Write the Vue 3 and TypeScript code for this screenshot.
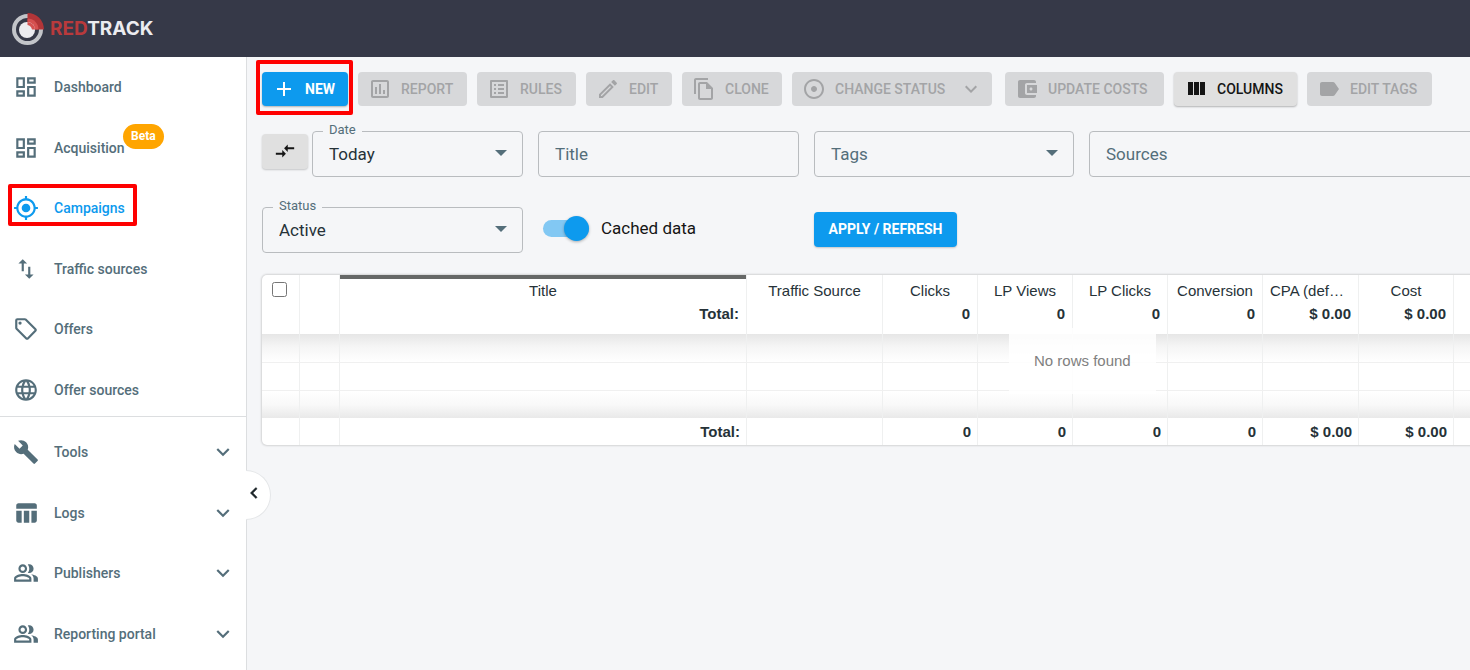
<script setup lang="ts">
import { ref } from 'vue'

interface NavItem {
  label: string
  icon: string
  active?: boolean
  badge?: string
}

interface Action {
  key: string
  label: string
  icon: string
  enabled?: boolean
  menu?: boolean
  marked?: boolean
}

interface Column {
  key: string
  title: string
  total: string
}

const icons: Record<string, string> = {
  dashboard: 'M19 5v2h-4V5h4M9 5v6H5V5h4m10 8v6h-4v-6h4M9 17v2H5v-2h4M21 3h-8v6h8V3zM11 3H3v10h8V3zm10 8h-8v10h8V11zm-10 4H3v6h8v-6z',
  target: 'M12 8c-2.21 0-4 1.79-4 4s1.79 4 4 4 4-1.79 4-4-1.79-4-4-4zm8.94 3c-.46-4.17-3.77-7.48-7.94-7.94V1h-2v2.06C6.83 3.52 3.52 6.83 3.06 11H1v2h2.06c.46 4.17 3.77 7.48 7.94 7.94V23h2v-2.06c4.17-.46 7.48-3.77 7.94-7.94H23v-2h-2.06zM12 19c-3.87 0-7-3.13-7-7s3.13-7 7-7 7 3.13 7 7-3.13 7-7 7z',
  traffic: 'M9 3L5 6.99h3V14h2V6.99h3L9 3zm7 14.01V10h-2v7.01h-3L15 21l4-3.99h-3z',
  tag: 'M21.41 11.58l-9-9C12.04 2.21 11.53 2 11 2H4a2 2 0 00-2 2v7c0 .53.21 1.04.59 1.41l9 9c.36.36.86.59 1.41.59.53 0 1.04-.21 1.41-.59l7-7c.37-.36.59-.86.59-1.41 0-.53-.21-1.04-.59-1.42zM13 20.01L4 11V4h7l9 9-7 7.01zM6.5 5a1.5 1.5 0 100 3 1.5 1.5 0 000-3z',
  globe: 'M11.99 2C6.47 2 2 6.48 2 12s4.47 10 9.99 10C17.52 22 22 17.52 22 12S17.52 2 11.99 2zm6.93 6h-2.95c-.32-1.25-.78-2.45-1.38-3.56 1.84.63 3.37 1.91 4.33 3.56zM12 4.04c.83 1.2 1.48 2.53 1.91 3.96h-3.82c.43-1.43 1.08-2.76 1.91-3.96zM4.26 14C4.1 13.36 4 12.69 4 12s.1-1.36.26-2h3.38c-.08.66-.14 1.32-.14 2 0 .68.06 1.34.14 2H4.26zm.82 2h2.95c.32 1.25.78 2.45 1.38 3.56-1.84-.63-3.37-1.9-4.33-3.56zm2.95-8H5.08c.96-1.66 2.49-2.93 4.33-3.56C8.81 5.55 8.35 6.75 8.03 8zM12 19.96c-.83-1.2-1.48-2.53-1.91-3.96h3.82c-.43 1.43-1.08 2.76-1.91 3.96zM14.34 14H9.66c-.09-.66-.16-1.32-.16-2 0-.68.07-1.35.16-2h4.68c.09.65.16 1.32.16 2 0 .68-.07 1.34-.16 2zm.25 5.56c.6-1.11 1.06-2.31 1.38-3.56h2.95c-.96 1.65-2.49 2.93-4.33 3.56zM16.36 14c.08-.66.14-1.32.14-2 0-.68-.06-1.34-.14-2h3.38c.16.64.26 1.31.26 2s-.1 1.36-.26 2h-3.38z',
  wrench: 'M22.7 19l-9.1-9.1c.9-2.3.4-5-1.5-6.9-2-2-5-2.4-7.4-1.3L9 6 6 9 1.6 4.7C.4 7.1.9 10.1 2.9 12.1c1.9 1.9 4.6 2.4 6.9 1.5l9.1 9.1c.4.4 1 .4 1.4 0l2.3-2.3c.5-.4.5-1.1.1-1.4z',
  table: 'M10 10.02h5V21h-5zM17 21h3c1.1 0 2-.9 2-2v-9h-5v11zm3-18H5c-1.1 0-2 .9-2 2v3h19V5c0-1.1-.9-2-2-2zM3 19c0 1.1.9 2 2 2h3V10.02H3V19z',
  people: 'M16.67 13.13C18.04 14.06 19 15.32 19 17v3h4v-3c0-2.18-3.57-3.47-6.33-3.87zM15 12c2.21 0 4-1.79 4-4s-1.79-4-4-4c-.47 0-.91.1-1.33.24C14.5 5.27 15 6.58 15 8s-.5 2.73-1.33 3.76c.42.14.86.24 1.33.24zM9 12c2.21 0 4-1.79 4-4s-1.79-4-4-4-4 1.79-4 4 1.79 4 4 4zm0-6c1.1 0 2 .9 2 2s-.9 2-2 2-2-.9-2-2 .9-2 2-2zm0 7c-2.67 0-8 1.34-8 4v3h16v-3c0-2.66-5.33-4-8-4zm6 5H3v-.99C3.2 16.29 6.3 15 9 15s5.8 1.29 6 2v1z',
  chevron: 'M16.59 8.59L12 13.17 7.41 8.59 6 10l6 6 6-6z',
  back: 'M15.41 7.41L14 6l-6 6 6 6 1.41-1.41L10.83 12z',
  add: 'M19 13h-6v6h-2v-6H5v-2h6V5h2v6h6v2z',
  report: 'M9 17H7v-7h2v7zm4 0h-2V7h2v10zm4 0h-2v-4h2v4zm2 2H5V5h14v14zm0-16H5c-1.1 0-2 .9-2 2v14c0 1.1.9 2 2 2h14c1.1 0 2-.9 2-2V5c0-1.1-.9-2-2-2z',
  rules: 'M19 5v14H5V5h14m1.1-2H3.9c-.5 0-.9.4-.9.9v16.2c0 .4.4.9.9.9h16.2c.4 0 .9-.5.9-.9V3.9c0-.5-.5-.9-.9-.9zM11 7h6v2h-6V7zm0 4h6v2h-6v-2zm0 4h6v2h-6zM7 7h2v2H7zm0 4h2v2H7zm0 4h2v2H7z',
  edit: 'M14.06 9.02l.92.92L5.92 19H5v-.92l9.06-9.06M17.66 3c-.25 0-.51.1-.7.29l-1.83 1.83 3.75 3.75 1.83-1.83c.39-.39.39-1.02 0-1.41l-2.34-2.34c-.2-.2-.45-.29-.71-.29zm-3.6 3.19L3 17.25V21h3.75L17.81 9.94l-3.75-3.75z',
  clone: 'M16 1H4c-1.1 0-2 .9-2 2v14h2V3h12V1zm-1 4H8c-1.1 0-1.99.9-1.99 2L6 21c0 1.1.89 2 1.99 2H19c1.1 0 2-.9 2-2V11l-6-6zM8 21V7h6v5h5v9H8z',
  status: 'M12 2C6.49 2 2 6.49 2 12s4.49 10 10 10 10-4.49 10-10S17.51 2 12 2zm0 18c-4.41 0-8-3.59-8-8s3.59-8 8-8 8 3.59 8 8-3.59 8-8 8zm3-8c0 1.66-1.34 3-3 3s-3-1.34-3-3 1.34-3 3-3 3 1.34 3 3z',
  wallet: 'M21 18v1c0 1.1-.9 2-2 2H5c-1.11 0-2-.9-2-2V5c0-1.1.89-2 2-2h14c1.1 0 2 .9 2 2v1h-9c-1.11 0-2 .9-2 2v8c0 1.1.89 2 2 2h9zm-9-2h10V8H12v8zm4-2.5c-.83 0-1.5-.67-1.5-1.5s.67-1.5 1.5-1.5 1.5.67 1.5 1.5-.67 1.5-1.5 1.5z',
  columns: 'M10 18h5V5h-5v13zm-6 0h5V5H4v13zM16 5v13h5V5h-5z',
  label: 'M17.63 5.84C17.27 5.33 16.67 5 16 5L5 5.01C3.9 5.01 3 5.9 3 7v10c0 1.1.9 1.99 2 1.99L16 19c.67 0 1.27-.33 1.63-.84L22 12l-4.37-6.16z',
  compare: 'M9.01 14H2v2h7.01v3L13 15l-3.99-4v3zm5.98-1v-3H22V8h-7.01V5L11 9l3.99 4z',
}

const pages: NavItem[] = [
  { label: 'Dashboard', icon: 'dashboard' },
  { label: 'Acquisition', icon: 'dashboard', badge: 'Beta' },
  { label: 'Campaigns', icon: 'target', active: true },
  { label: 'Traffic sources', icon: 'traffic' },
  { label: 'Offers', icon: 'tag' },
  { label: 'Offer sources', icon: 'globe' },
]

const sections: NavItem[] = [
  { label: 'Tools', icon: 'wrench' },
  { label: 'Logs', icon: 'table' },
  { label: 'Publishers', icon: 'people' },
  { label: 'Reporting portal', icon: 'people' },
]

const actions: Action[] = [
  { key: 'new', label: 'NEW', icon: 'add', enabled: true, marked: true },
  { key: 'report', label: 'REPORT', icon: 'report' },
  { key: 'rules', label: 'RULES', icon: 'rules' },
  { key: 'edit', label: 'EDIT', icon: 'edit' },
  { key: 'clone', label: 'CLONE', icon: 'clone' },
  { key: 'status', label: 'CHANGE STATUS', icon: 'status', menu: true },
  { key: 'costs', label: 'UPDATE COSTS', icon: 'wallet' },
  { key: 'columns', label: 'COLUMNS', icon: 'columns', enabled: true },
  { key: 'tags', label: 'EDIT TAGS', icon: 'label' },
]

const columns: Column[] = [
  { key: 'title', title: 'Title', total: 'Total:' },
  { key: 'source', title: 'Traffic Source', total: '' },
  { key: 'clicks', title: 'Clicks', total: '0' },
  { key: 'lp-views', title: 'LP Views', total: '0' },
  { key: 'lp-clicks', title: 'LP Clicks', total: '0' },
  { key: 'conversion', title: 'Conversion', total: '0' },
  { key: 'cpa', title: 'CPA (default)', total: '$ 0.00' },
  { key: 'cost', title: 'Cost', total: '$ 0.00' },
  { key: 'more', title: '', total: '' },
]

const date = ref('Today')
const status = ref('Active')
const tags = ref('')
const source = ref('')
const title = ref('')
const cached = ref(true)
</script>

<template>
  <div class="app">
    <header class="topbar">
      <a class="brand" href="#" aria-label="RedTrack">
        <svg class="brand-mark" viewBox="0 0 32 32" aria-hidden="true">
          <circle cx="15.5" cy="16.5" r="13.5" fill="none" stroke="#c3c5c9" stroke-width="4" />
          <path d="M15.5 0A16.5 16.5 0 0 1 32 16.5H15.5z" fill="#b23538" />
          <path d="M15.5 5.500A11 11 0 0 1 26.500 16.500H15.500z" fill="#d55050" />
          <circle cx="15" cy="17" r="8" fill="#ececf0" />
          <path d="M15.5 9a8 8 0 0 1 7.500 7.500H20A6 6 0 0 0 15.500 12z" fill="#d55050" />
        </svg>
        <span class="brand-name"><span class="brand-red">RED</span>TRACK</span>
      </a>
    </header>

    <div class="layout">
      <aside class="sidebar">
        <nav aria-label="Main">
          <ul class="nav pages">
            <li v-for="item in pages" :key="item.label" class="nav-row">
              <a class="nav-item" :class="{ active: item.active }" href="#">
                <svg class="nav-icon" viewBox="0 0 24 24" aria-hidden="true"><path :d="icons[item.icon]" /></svg>
                <span>{{ item.label }}</span>
              </a>
              <span v-if="item.badge" class="badge">{{ item.badge }}</span>
              <span v-if="item.active" class="marker nav-marker" aria-hidden="true"></span>
            </li>
          </ul>
          <ul class="nav sections">
            <li v-for="item in sections" :key="item.label" class="nav-row">
              <button class="nav-item" type="button" aria-expanded="false">
                <svg class="nav-icon" viewBox="0 0 24 24" aria-hidden="true"><path :d="icons[item.icon]" /></svg>
                <span>{{ item.label }}</span>
                <svg class="nav-icon nav-chevron" viewBox="0 0 24 24" aria-hidden="true"><path :d="icons.chevron" /></svg>
              </button>
            </li>
          </ul>
        </nav>
        <button class="collapse" type="button" aria-label="Collapse menu">
          <svg class="collapse-icon" viewBox="0 0 24 24" aria-hidden="true"><path :d="icons.back" /></svg>
        </button>
      </aside>

      <main class="content">
        <div class="toolbar">
          <div v-for="action in actions" :key="action.key" class="action" :class="`action-${action.key}`">
            <button class="btn" type="button" :disabled="!action.enabled">
              <svg class="btn-icon" viewBox="0 0 24 24" aria-hidden="true"><path :d="icons[action.icon]" /></svg>
              <span>{{ action.label }}</span>
              <svg v-if="action.menu" class="btn-icon btn-chevron" viewBox="0 0 24 24" aria-hidden="true"><path :d="icons.chevron" /></svg>
            </button>
            <span v-if="action.marked" class="marker action-marker" aria-hidden="true"></span>
          </div>
        </div>

        <form class="filters" @submit.prevent>
          <div class="date-group">
            <button class="compare" type="button" aria-label="Compare dates">
              <svg class="compare-icon" viewBox="0 0 24 24" aria-hidden="true"><path :d="icons.compare" /></svg>
            </button>
            <div class="field">
              <label class="field-label" for="date">Date</label>
              <select id="date" v-model="date" class="control">
                <option>Today</option>
                <option>Yesterday</option>
              </select>
              <span class="arrow" aria-hidden="true"></span>
            </div>
          </div>
          <div class="field">
            <input v-model="title" class="control" type="text" placeholder="Title" aria-label="Title" />
          </div>
          <div class="field">
            <select v-model="tags" class="control empty" aria-label="Tags">
              <option value="">Tags</option>
            </select>
            <span class="arrow" aria-hidden="true"></span>
          </div>
          <div class="field">
            <select v-model="source" class="control empty" aria-label="Sources">
              <option value="">Sources</option>
            </select>
          </div>
          <div class="field">
            <label class="field-label" for="status">Status</label>
            <select id="status" v-model="status" class="control">
              <option>Active</option>
              <option>Paused</option>
            </select>
            <span class="arrow" aria-hidden="true"></span>
          </div>
          <label class="switch" for="cached">
            <input id="cached" v-model="cached" class="switch-input" type="checkbox" role="switch" />
            <span>Cached data</span>
          </label>
          <button class="apply" type="submit">APPLY / REFRESH</button>
        </form>

        <section class="grid" aria-label="Campaigns">
          <table>
            <colgroup>
              <col class="col-check" />
              <col class="col-icon" />
              <col v-for="col in columns" :key="col.key" :class="`col-${col.key}`" />
            </colgroup>
            <thead>
              <tr class="titles">
                <th><input class="check" type="checkbox" aria-label="Select all" /></th>
                <th></th>
                <th v-for="col in columns" :key="col.key" :class="{ sorted: col.key === 'title' }">{{ col.title }}</th>
              </tr>
              <tr class="totals">
                <td></td>
                <td></td>
                <td v-for="col in columns" :key="col.key">{{ col.total }}</td>
              </tr>
            </thead>
            <tbody>
              <tr v-for="row in 3" :key="row">
                <td v-for="cell in columns.length + 2" :key="cell"></td>
              </tr>
            </tbody>
            <tfoot>
              <tr>
                <td></td>
                <td></td>
                <td v-for="col in columns" :key="col.key">{{ col.total }}</td>
              </tr>
            </tfoot>
          </table>
          <p class="no-rows">No rows found</p>
        </section>
      </main>
    </div>
  </div>
</template>

<style>
body {
  background: #f5f6f8;
}
</style>

<style scoped>
.app {
  display: flex;
  flex-direction: column;
  height: 100vh;
  overflow: hidden;
  font-family: Roboto, "Liberation Sans", sans-serif;
  color: #263238;
}

.app *,
.app *::before {
  box-sizing: border-box;
}

svg {
  display: block;
  flex: none;
  fill: currentColor;
}

button {
  font-family: inherit;
  cursor: pointer;
}

.topbar {
  flex: none;
  display: flex;
  align-items: center;
  height: 57px;
  padding: 0 12px;
  background: #363948;
}

.brand {
  display: flex;
  align-items: center;
  gap: 6px;
  color: #ececf0;
  text-decoration: none;
}

.brand-mark {
  width: 32px;
  height: 32px;
}

.brand-name {
  font: 700 19px/24px Inter, "Liberation Sans", sans-serif;
}

.brand-red {
  color: #b93a3c;
}

.layout {
  flex: 1;
  display: flex;
  min-height: 0;
}

.sidebar {
  position: relative;
  z-index: 1;
  flex: none;
  width: 247px;
  border-right: 1px solid #dcdee0;
  background: #fff;
}

.nav {
  display: flex;
  flex-direction: column;
  justify-content: space-between;
  margin: 0;
  padding: 0;
  list-style: none;
}

.pages {
  min-height: 360px;
  padding: 6px 0 2px;
  border-bottom: 1px solid #dcdee0;
}

.sections {
  min-height: 241px;
  padding-top: 11px;
}

.nav-row {
  position: relative;
}

.nav-item {
  display: flex;
  align-items: center;
  gap: 15px;
  width: 100%;
  height: 48px;
  padding: 0 10px 0 13px;
  border: 0;
  background: none;
  color: #546e7a;
  font-size: 14px;
  font-weight: 500;
  line-height: 20px;
  text-decoration: none;
}

.nav-item.active {
  color: #0d9aee;
}

.nav-icon {
  width: 26px;
  height: 26px;
}

.nav-chevron {
  margin-left: auto;
}

.badge {
  position: absolute;
  top: 0;
  left: 123px;
  padding: 0 8px;
  border-radius: 13px;
  background: #ffa500;
  color: #fff;
  font-size: 12px;
  font-weight: 700;
  line-height: 25px;
}

.marker {
  position: absolute;
  border: 4px solid #fe0000;
  border-radius: 2px;
  pointer-events: none;
}

.nav-marker {
  top: 0;
  left: 8px;
  width: 129px;
  height: 42px;
}

.action-marker {
  inset: -12px -5px -9px -6px;
}

.collapse {
  position: absolute;
  top: 413px;
  left: 246px;
  display: flex;
  align-items: center;
  width: 25px;
  height: 50px;
  padding: 0 0 4px;
  border: 1px solid #e4e6e8;
  border-left: 0;
  border-radius: 0 25px 25px 0;
  background: #fff;
  color: #1d2529;
}

.collapse-icon {
  width: 22px;
  height: 22px;
  margin-left: -3px;
  stroke: currentColor;
  stroke-width: 0.5;
}

.content {
  flex: 1;
  min-width: 0;
  padding: 15px 0 0 15px;
  overflow: hidden;
}

.toolbar {
  display: flex;
  gap: 10px;
}

.action {
  position: relative;
  flex: none;
}

.btn {
  display: flex;
  align-items: center;
  gap: 9px;
  width: 100%;
  height: 34px;
  padding: 0 9px 0 10px;
  border: 0;
  border-radius: 4px;
  background: #e0e0e0;
  color: #151515;
  font-size: 14px;
  font-weight: 500;
  white-space: nowrap;
  box-shadow: 0 1px 2px rgba(0, 0, 0, 0.28);
}

.btn:disabled {
  background: #d7d8da;
  color: #a3a4a6;
  box-shadow: none;
}

.btn-icon {
  width: 24px;
  height: 24px;
}

.btn-chevron {
  margin-left: auto;
}

.action-new { width: 86px; }
.action-report { width: 109px; }
.action-rules { width: 99px; }
.action-edit { width: 86px; }
.action-clone { width: 100px; }
.action-status { width: 200px; margin-right: 3px; }
.action-costs { width: 159px; }
.action-columns { width: 123px; }
.action-tags { width: 125px; }

.action-new .btn {
  background: #0d9aee;
  color: #fff;
  font-weight: 700;
}

.filters {
  display: grid;
  grid-template-columns: 261fr 261fr 260fr 401fr;
  gap: 30px 15px;
  align-items: center;
  margin: 25px -20px 0 0;
}

.date-group {
  display: flex;
  align-items: center;
  gap: 4px;
}

.compare {
  display: flex;
  align-items: center;
  justify-content: center;
  width: 46px;
  height: 35px;
  margin-bottom: 6px;
  padding: 0;
  border: 0;
  border-radius: 4px;
  background: #e0e0e0;
  color: #151515;
  box-shadow: 0 1px 2px rgba(0, 0, 0, 0.2);
}

.compare-icon {
  width: 22px;
  height: 22px;
}

.field {
  position: relative;
  flex: 1;
  min-width: 0;
}

.field-label {
  position: absolute;
  top: -9px;
  left: 11px;
  padding: 0 6px;
  background: #f5f6f8;
  color: #546e7a;
  font-size: 13px;
  line-height: 16px;
}

.control {
  display: block;
  width: 100%;
  height: 46px;
  padding: 0 16px;
  border: 1px solid #b9bcbf;
  border-radius: 4px;
  outline: 0;
  background: transparent;
  color: #263238;
  font-family: inherit;
  font-size: 17px;
  appearance: none;
}

.control.empty,
.control::placeholder {
  color: #546e7a;
  opacity: 1;
}

.arrow {
  position: absolute;
  top: 19px;
  right: 16px;
  border: 6px solid transparent;
  border-top-color: #546e7a;
  border-bottom: 0;
  pointer-events: none;
}

.switch {
  display: flex;
  align-items: center;
  gap: 12px;
  padding: 0 0 4px 5px;
  color: #151515;
  font-size: 17px;
  line-height: 24px;
}

.switch-input {
  position: relative;
  width: 46px;
  height: 17px;
  margin: 0;
  border-radius: 9px;
  background: #82c8f3;
  appearance: none;
}

.switch-input::before {
  content: "";
  position: absolute;
  top: -4px;
  left: 0;
  width: 25px;
  height: 25px;
  border-radius: 50%;
  background: #fafafa;
  box-shadow: 0 1px 3px rgba(0, 0, 0, 0.3);
}

.switch-input:checked::before {
  right: 0;
  left: auto;
  background: #0d9aee;
}

.apply {
  justify-self: start;
  width: 143px;
  height: 35px;
  margin-bottom: 2px;
  padding: 0;
  border: 0;
  border-radius: 4px;
  background: #0d9aee;
  color: #fff;
  font-size: 14px;
  font-weight: 700;
  white-space: nowrap;
  box-shadow: 0 1px 2px rgba(0, 0, 0, 0.2);
}

.grid {
  position: relative;
  margin: 22px -20px 0 0;
  border-radius: 5px;
  background: #fff;
  box-shadow: 0 0 2px 1px rgba(0, 0, 0, 0.14);
}

table {
  width: 100%;
  border-spacing: 0;
  table-layout: fixed;
  font-family: "Liberation Sans", Arial, sans-serif;
  font-size: 15px;
  line-height: 20px;
}

.col-check { width: 38px; }
.col-icon { width: 40px; }
.col-source { width: 136px; }
.col-clicks,
.col-lp-views,
.col-lp-clicks,
.col-conversion,
.col-cost { width: 95px; }
.col-cpa { width: 96px; }
.col-more { width: 36px; }

th,
td {
  overflow: hidden;
  padding: 0 7px;
  border-right: 1px solid #eff0f0;
  text-overflow: ellipsis;
  white-space: nowrap;
}

th {
  height: 29px;
  padding-top: 3px;
  font-weight: 400;
  text-align: center;
}

th.sorted {
  box-shadow: inset 0 4px #666867;
}

th:first-child {
  padding: 0;
}

td {
  font-weight: 700;
  text-align: right;
}

.check {
  display: block;
  width: 15px;
  height: 15px;
  margin: 0 0 0 10px;
}

.totals td {
  height: 30px;
  padding-bottom: 10px;
}

tbody td {
  height: 28px;
  border-bottom: 1px solid #f0f0f0;
}

tbody tr:first-child td {
  height: 29px;
  background: linear-gradient(#e6e6e6, #f5f5f5 45%, #fff);
}

tbody tr:last-child td {
  height: 27px;
  border-bottom: 0;
  background: linear-gradient(#fff, #f9f9f9 50%, #e9e9e9);
}

tfoot td {
  height: 27px;
  padding-right: 6px;
}

.no-rows {
  position: absolute;
  top: 53px;
  left: 747px;
  margin: 0;
  padding: 23px 25px;
  background: rgba(255, 255, 255, 0.85);
  color: #808080;
  font: 15px/20px "Liberation Sans", Arial, sans-serif;
}
</style>
